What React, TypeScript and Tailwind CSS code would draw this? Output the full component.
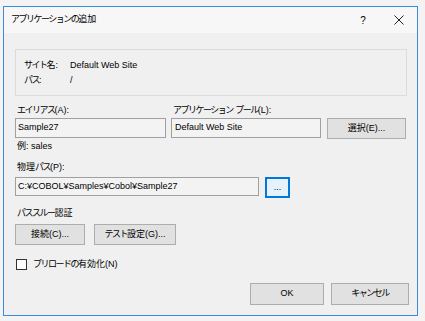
import { useState } from "react";

const font = "font-['Liberation_Sans','Noto_Sans_CJK_JP',sans-serif]";

// narrow kana like Meiryo UI
const J = ({ children }: { children: React.ReactNode }) => (
    <span className="tracking-[-1.5px]">{children}</span>
);

const Btn = ({ children, className = "" }: { children: React.ReactNode; className?: string }) => (
    <button className={`h-[21px] border border-[#adadad] bg-[#e1e1e1] text-[9px] text-black flex items-center justify-center ${className}`}>
        {children}
    </button>
);

export default function App() {
    const [preload, setPreload] = useState(false);

    return (
        <div className={`w-[425px] h-[321px] bg-[#f3f3f3] pt-[6px] pl-[3px] ${font}`}>
            <div className="w-[415px] h-[310px] border border-[#3c8bd9] bg-[#f0f0f0] flex flex-col">
                {/* title bar */}
                <div className="h-[26px] bg-[#f7f7f7] flex items-center pl-[7px] text-[9px] text-black">
                    <J>アプリケーションの</J>追加
                    <span className="ml-auto w-[20px] text-center text-[10px]">?</span>
                    <span className="ml-[14px] mr-[6px] w-[24px] flex justify-center">
                        <svg width="10" height="10" viewBox="0 0 10 10">
                            <path d="M0.5 0.5 L9.5 9.5 M9.5 0.5 L0.5 9.5" stroke="#222" strokeWidth="1" />
                        </svg>
                    </span>
                </div>

                <div className="flex flex-col pl-[11px] text-[9px] text-black">
                    {/* site info */}
                    <div className="mt-[16px] w-[392px] h-[47px] border border-[#dcdcdc] pt-[8px] pl-[8px]">
                        <div className="flex h-[15px] items-center">
                            <span className="w-[46px]"><J>サイト</J>名:</span>
                            <span>Default Web Site</span>
                        </div>
                        <div className="flex h-[15px] items-center">
                            <span className="w-[46px]"><J>パス</J>:</span>
                            <span>/</span>
                        </div>
                    </div>

                    {/* alias + pool */}
                    <div className="flex mt-[8px] h-[14px] items-center">
                        <span className="w-[156px] pl-[2px]"><J>エイリアス</J>(A):</span>
                        <span className="pl-[2px]"><J>アプリケーション</J> <J>プール</J>(L):</span>
                    </div>
                    <div className="flex h-[21px] items-start">
                        <div className="w-[151px] h-[20px] border border-[#a0a0a0] bg-[#f3f3f3] flex items-center pl-[2px]">Sample27</div>
                        <div className="ml-[5px] w-[150px] h-[20px] border border-[#a0a0a0] bg-[#f3f3f3] flex items-center pl-[3px]">Default Web Site</div>
                        <Btn className="ml-[6px] w-[79px]">選択(E)...</Btn>
                    </div>
                    <div className="mt-[1px] h-[14px] flex items-center pl-[2px]">例: sales</div>

                    {/* physical path */}
                    <div className="mt-[7px] h-[14px] flex items-center pl-[2px]">物理<J>パス</J>(P):</div>
                    <div className="mt-[2px] flex h-[21px] items-start">
                        <div className="w-[244px] h-[19px] border border-[#a0a0a0] bg-[#f3f3f3] flex items-center pl-[2px]">C:¥COBOL¥Samples¥Cobol¥Sample27</div>
                        <button className="ml-[6px] w-[25px] h-[21px] border-2 border-[#0078d7] bg-[#e5f1fb] text-[9px] flex items-center justify-center">...</button>
                    </div>

                    {/* pass-through */}
                    <div className="mt-[9px] h-[14px] flex items-center pl-[2px]"><J>パススルー</J>認証</div>
                    <div className="mt-[3px] flex">
                        <Btn className="w-[70px]">接続(C)...</Btn>
                        <Btn className="ml-[9px] w-[82px]"><J>テスト</J>設定(G)...</Btn>
                    </div>

                    {/* preload */}
                    <label className="mt-[13px] h-[13px] flex items-center cursor-default">
                        <input
                            type="checkbox"
                            checked={preload}
                            onChange={e => setPreload(e.target.checked)}
                            className="ml-[1px] w-[11px] h-[11px] appearance-none border border-[#333] bg-white"
                        />
                        <span className="ml-[6px]"><J>プリロードの</J>有効化(N)</span>
                    </label>

                    {/* footer */}
                    <div className="mt-[12px] flex justify-end pr-[8px]">
                        <Btn className="w-[74px] h-[22px]">OK</Btn>
                        <Btn className="ml-[7px] w-[78px] h-[22px]"><J>キャンセル</J></Btn>
                    </div>
                </div>
            </div>
        </div>
    );
}
